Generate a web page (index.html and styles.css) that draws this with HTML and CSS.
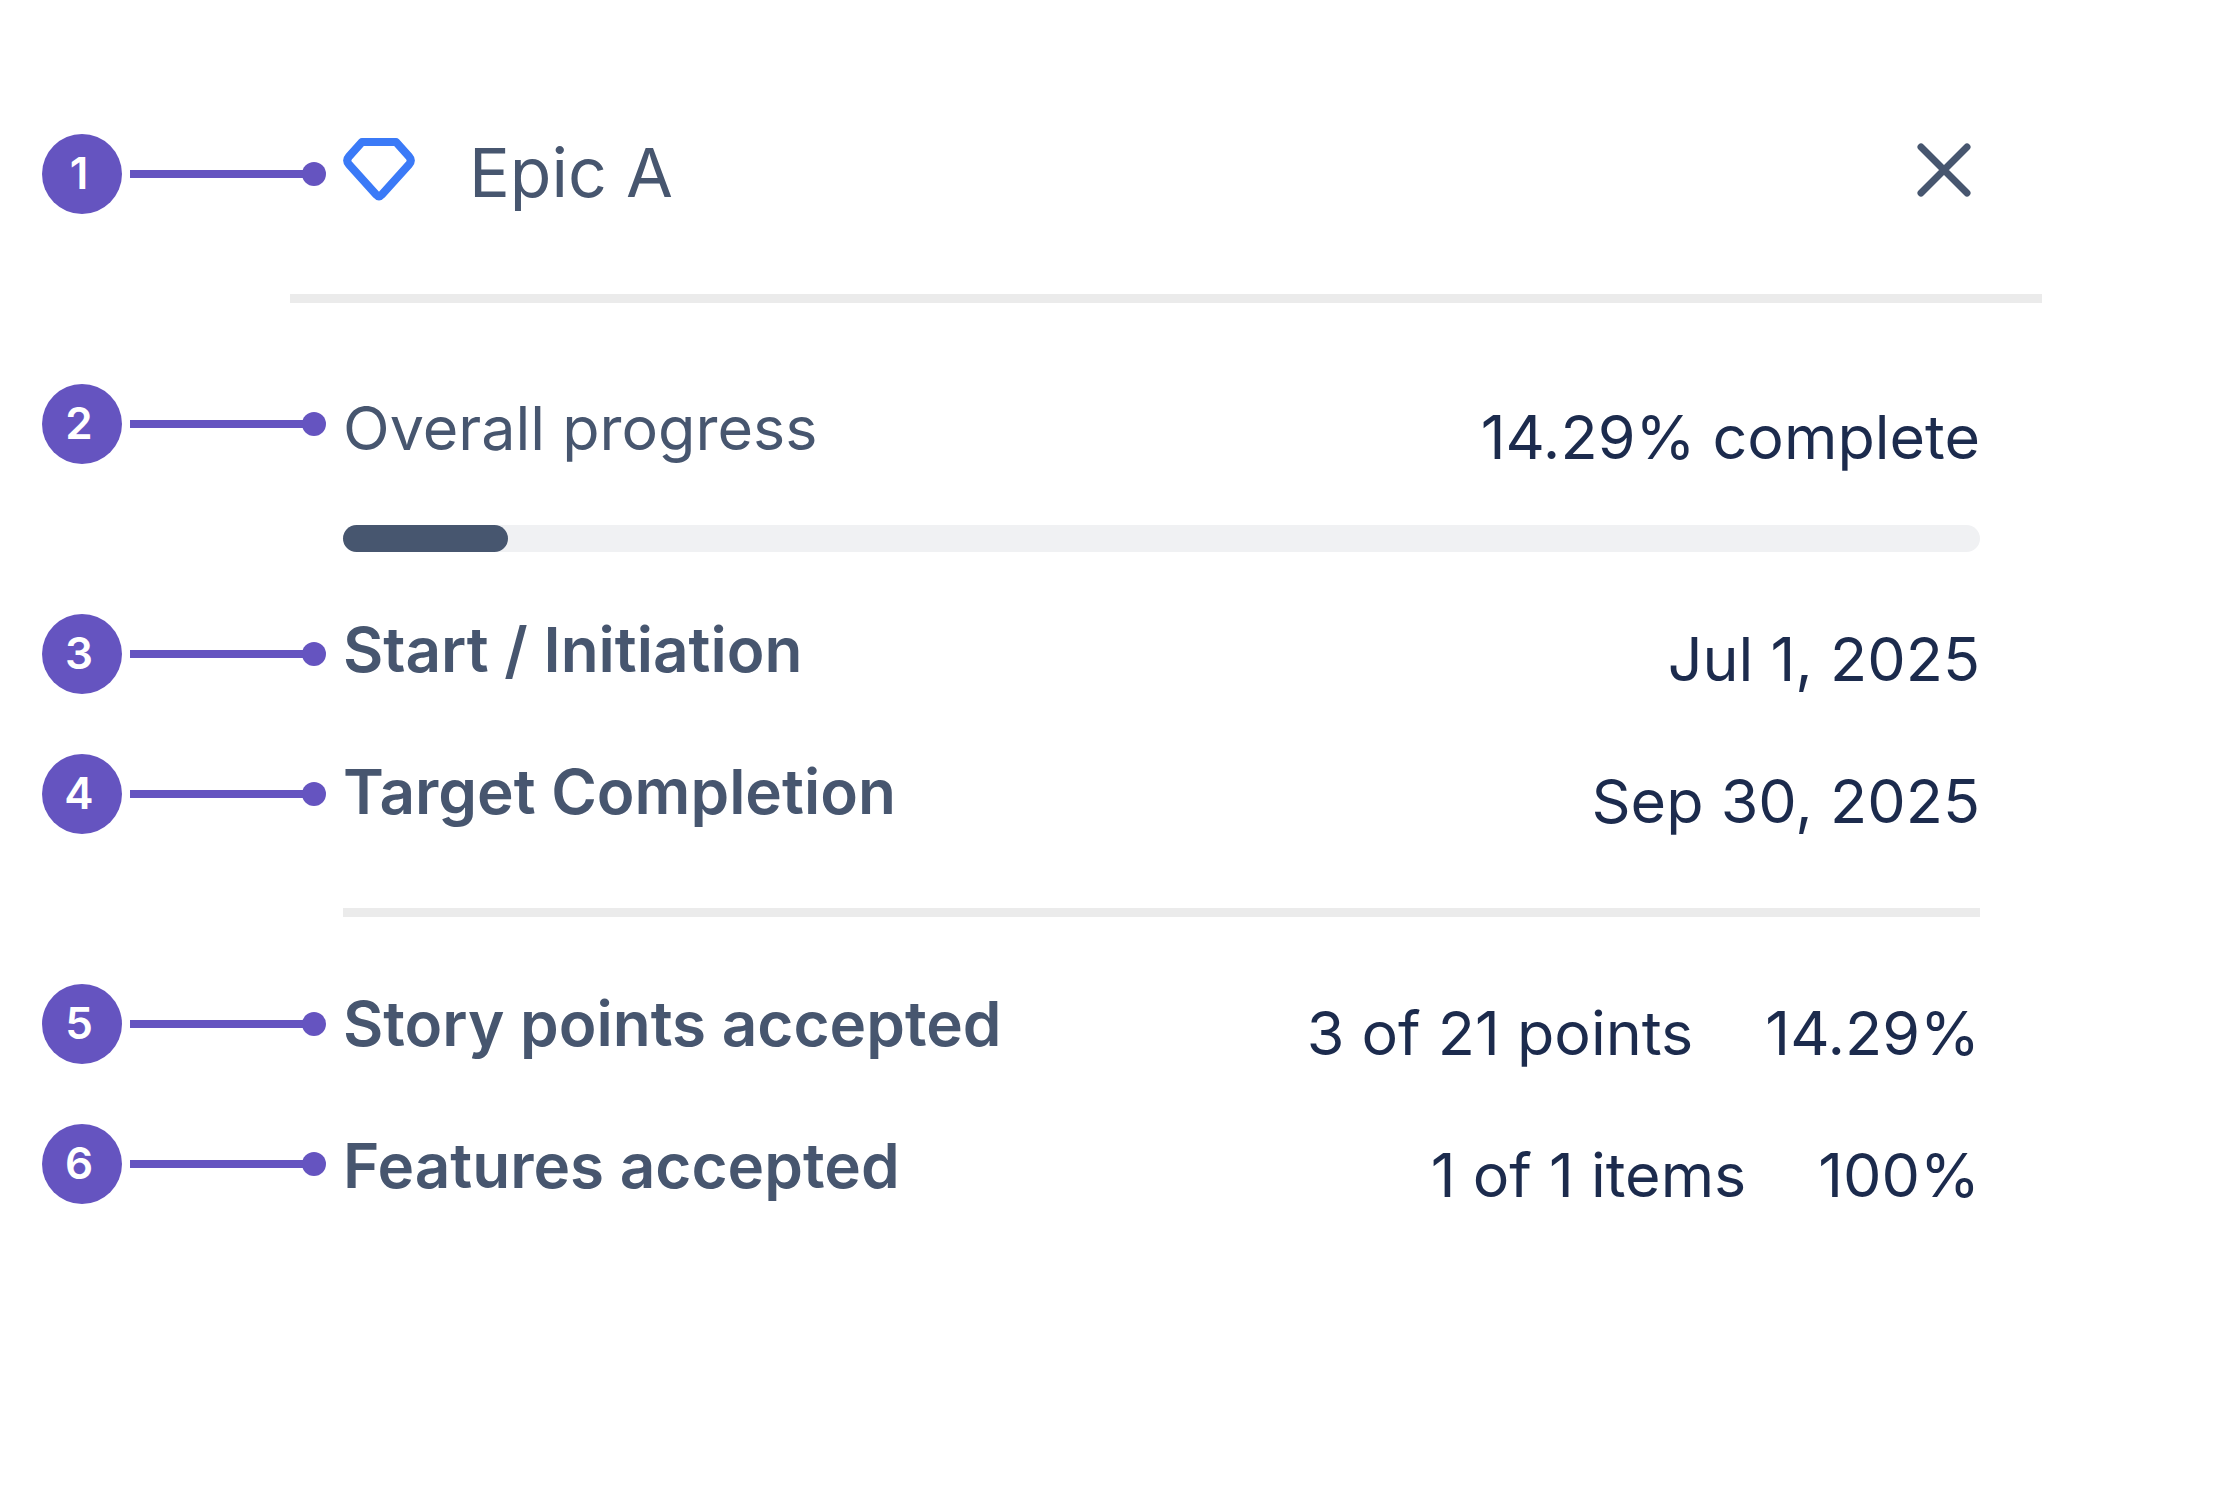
FILE: index.html
```html
<!DOCTYPE html>
<html lang="en">
<head>
    <meta charset="UTF-8">
    <title>Epic A</title>
    <link rel="stylesheet" href="styles.css">
</head>
<body>
<div class="page">
    <ol class="callouts">
        <li class="callout"><span class="number">1</span><span class="line"></span></li>
        <li class="callout section"><span class="number">2</span><span class="line"></span></li>
        <li class="callout group"><span class="number">3</span><span class="line"></span></li>
        <li class="callout"><span class="number">4</span><span class="line"></span></li>
        <li class="callout group"><span class="number">5</span><span class="line"></span></li>
        <li class="callout"><span class="number">6</span><span class="line"></span></li>
    </ol>
    <div class="panel">
        <header class="header">
            <svg class="gem" viewBox="0 0 72 63" aria-hidden="true">
                <path d="M19 4H53L66 18.500Q69.500 22.500 66 26.500L38.500 57Q36 60 33.500 57L6 26.500Q2.500 22.500 6 18.500Z"/>
            </svg>
            <h1 class="title">Epic A</h1>
            <button class="close" type="button" aria-label="Close">
                <svg viewBox="0 0 54 54" aria-hidden="true">
                    <path d="M4 4L50 50M50 4L4 50"/>
                </svg>
            </button>
        </header>
        <div class="content">
            <div class="row">
                <span class="label" id="progress-label">Overall progress</span>
                <span class="value">14.29% complete</span>
            </div>
            <div class="bar" role="progressbar" aria-labelledby="progress-label" aria-valuenow="14.29" aria-valuemin="0" aria-valuemax="100">
                <div class="fill" style="width: 10.1%"></div>
            </div>
            <dl class="list">
                <div class="row">
                    <dt class="label strong">Start / Initiation</dt>
                    <dd class="value">Jul 1, 2025</dd>
                </div>
                <div class="row">
                    <dt class="label strong">Target Completion</dt>
                    <dd class="value">Sep 30, 2025</dd>
                </div>
            </dl>
            <hr class="divider">
            <dl class="list">
                <div class="row">
                    <dt class="label strong">Story points accepted</dt>
                    <dd class="value"><span>3 of 21 points</span><span>14.29%</span></dd>
                </div>
                <div class="row">
                    <dt class="label strong">Features accepted</dt>
                    <dd class="value"><span>1 of 1 items</span><span>100%</span></dd>
                </div>
            </dl>
        </div>
    </div>
</div>
</body>
</html>
```
FILE: styles.css
```css
* {
    margin: 0;
    padding: 0;
    box-sizing: border-box;
}
body {
    background: #fff;
    color: #47566f;
    font-family: Inter, "Liberation Sans", sans-serif;
    font-size: 61px;
    font-weight: 440;
    line-height: 76px;
}
.page {
    display: flex;
    align-items: flex-start;
    padding: 134px 172px 134px 42px;
}

/* numbered markers */
.callouts {
    flex: none;
    width: 248px;
    list-style: none;
}
.callout {
    display: flex;
    align-items: center;
    gap: 8px;
    width: 284px;
    margin-top: 60px;
}
.callout:first-child {
    margin-top: 0;
}
.callout.section {
    margin-top: 170px;
}
.callout.group {
    margin-top: 150px;
}
.number {
    width: 80px;
    height: 80px;
    padding-right: 6px;
    border-radius: 50%;
    background: #6554c0;
    color: #fff;
    font-size: 44px;
    font-weight: 600;
    line-height: 78px;
    text-align: center;
}
.line {
    display: flex;
    flex: 1;
    align-items: center;
    height: 24px;
}
.line::before {
    content: "";
    flex: 1;
    height: 8px;
    margin-right: -4px;
    background: #6554c0;
}
.line::after {
    content: "";
    width: 24px;
    height: 24px;
    border-radius: 50%;
    background: #6554c0;
}

.panel {
    flex: 1;
}
.header {
    display: flex;
    align-items: flex-start;
    padding: 0 71px 84px 53px;
    border-bottom: 9px solid #ebebeb;
}
.gem {
    width: 72px;
    height: 63px;
    margin: 4px 54px 0 0;
    fill: none;
    stroke: #3b7af7;
    stroke-width: 8;
    stroke-linejoin: round;
}
.title {
    flex: 1;
    font-size: 68px;
    font-weight: 440;
}
.close {
    width: 54px;
    height: 54px;
    margin-top: 9px;
    border: none;
    background: none;
    cursor: pointer;
}
.close svg {
    display: block;
    fill: none;
    stroke: #47566f;
    stroke-width: 7;
    stroke-linecap: round;
}

.content {
    padding: 87px 62px 0 53px;
}
.row {
    display: flex;
    justify-content: space-between;
}
.label.strong {
    font-size: 62px;
    font-weight: 620;
}
.value {
    display: flex;
    gap: 72px;
    padding-top: 9px;
    color: #1c2b4d;
}
.bar {
    height: 27px;
    margin: 50px 0 60px;
    border-radius: 14px;
    background: #f0f1f3;
}
.fill {
    height: 100%;
    border-radius: 14px;
    background: #47566f;
}
.list {
    display: grid;
    gap: 57px;
}
.divider {
    height: 9px;
    margin: 69px 0;
    border: none;
    background: #ebebeb;
}
```
